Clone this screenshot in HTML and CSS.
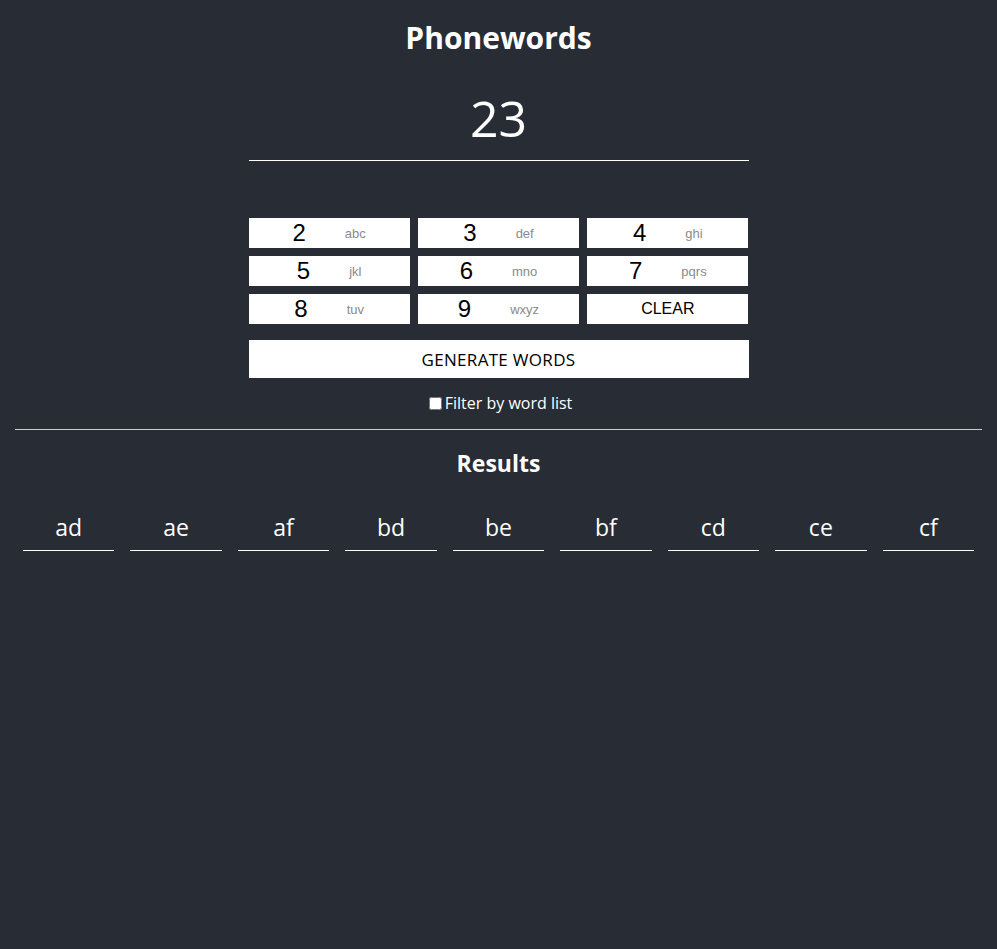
FILE: index.html
```html
<!DOCTYPE html>
<html>
<head>
<meta charset="utf-8">
<title>Phonewords</title>
<link rel="stylesheet" href="styles.css">
</head>
<body>
<div class="app">
  <h1 class="title">Phonewords</h1>
  <div class="phone">
    <div class="display">23</div>
    <div class="keypad">
      <button class="key"><span class="digit">2</span><span class="letters">abc</span></button>
      <button class="key"><span class="digit">3</span><span class="letters">def</span></button>
      <button class="key"><span class="digit">4</span><span class="letters">ghi</span></button>
      <button class="key"><span class="digit">5</span><span class="letters">jkl</span></button>
      <button class="key"><span class="digit">6</span><span class="letters">mno</span></button>
      <button class="key"><span class="digit">7</span><span class="letters">pqrs</span></button>
      <button class="key"><span class="digit">8</span><span class="letters">tuv</span></button>
      <button class="key"><span class="digit">9</span><span class="letters">wxyz</span></button>
      <button class="key clear">CLEAR</button>
    </div>
    <button class="generate">GENERATE WORDS</button>
    <label class="filter"><input type="checkbox" class="check">Filter by word list</label>
  </div>
  <hr class="divider">
  <h2 class="results-title">Results</h2>
  <div class="results">
    <div class="word">ad</div>
    <div class="word">ae</div>
    <div class="word">af</div>
    <div class="word">bd</div>
    <div class="word">be</div>
    <div class="word">bf</div>
    <div class="word">cd</div>
    <div class="word">ce</div>
    <div class="word">cf</div>
  </div>
</div>
</body>
</html>
```

FILE: styles.css
```css
html, body {
  margin: 0;
  padding: 0;
  background: #282c34;
  min-height: 100%;
}
body {
  color: #ffffff;
  font-family: "Open Sans", "Noto Sans", sans-serif;
  font-size: 16px;
}
.app {
  padding: 18px 15px 0;
}
.title {
  margin: 0;
  font-size: 30px;
  line-height: 40px;
  font-weight: 700;
  text-align: center;
}
.phone {
  width: 500px;
  margin: 0 auto;
  display: flex;
  flex-direction: column;
  align-items: stretch;
}
.display {
  margin-top: 22px;
  height: 76px;
  line-height: 76px;
  padding-bottom: 4px;
  border-bottom: 1px solid #ffffff;
  font-size: 50px;
  text-align: center;
}
.keypad {
  margin-top: 57px;
  display: grid;
  grid-template-columns: repeat(3, 1fr);
  grid-auto-rows: 30px;
  gap: 8px;
}
.key {
  display: flex;
  align-items: center;
  justify-content: center;
  gap: 39px;
  margin: 0;
  padding: 0;
  border: none;
  background: #ffffff;
  color: #000000;
  font-family: "Liberation Sans", Arial, sans-serif;
}
.digit {
  font-size: 24px;
}
.letters {
  font-size: 13px;
  color: #8a8a8a;
}
.clear {
  font-size: 16px;
}
.generate {
  margin-top: 16px;
  height: 38px;
  border: none;
  padding: 0;
  background: #ffffff;
  color: #000000;
  font-family: "Open Sans", "Noto Sans", sans-serif;
  font-size: 17px;
  letter-spacing: 0.3px;
}
.filter {
  margin-top: 14px;
  line-height: 22px;
  display: flex;
  align-items: center;
  justify-content: center;
}
.check {
  margin: 0 3px 0 4px;
  width: 13px;
  height: 13px;
}
.divider {
  margin: 15px 0 0;
  border: none;
  border-top: 1px solid #cfcfcf;
  height: 0;
}
.results-title {
  margin: 18px 0 0;
  font-size: 23px;
  line-height: 30px;
  font-weight: 700;
  text-align: center;
}
.results {
  margin-top: 34px;
  display: grid;
  grid-template-columns: repeat(9, 1fr);
}
.word {
  margin: 0 8px;
  padding-bottom: 8px;
  line-height: 30px;
  font-size: 23px;
  text-align: center;
  border-bottom: 1px solid #ffffff;
}
```
